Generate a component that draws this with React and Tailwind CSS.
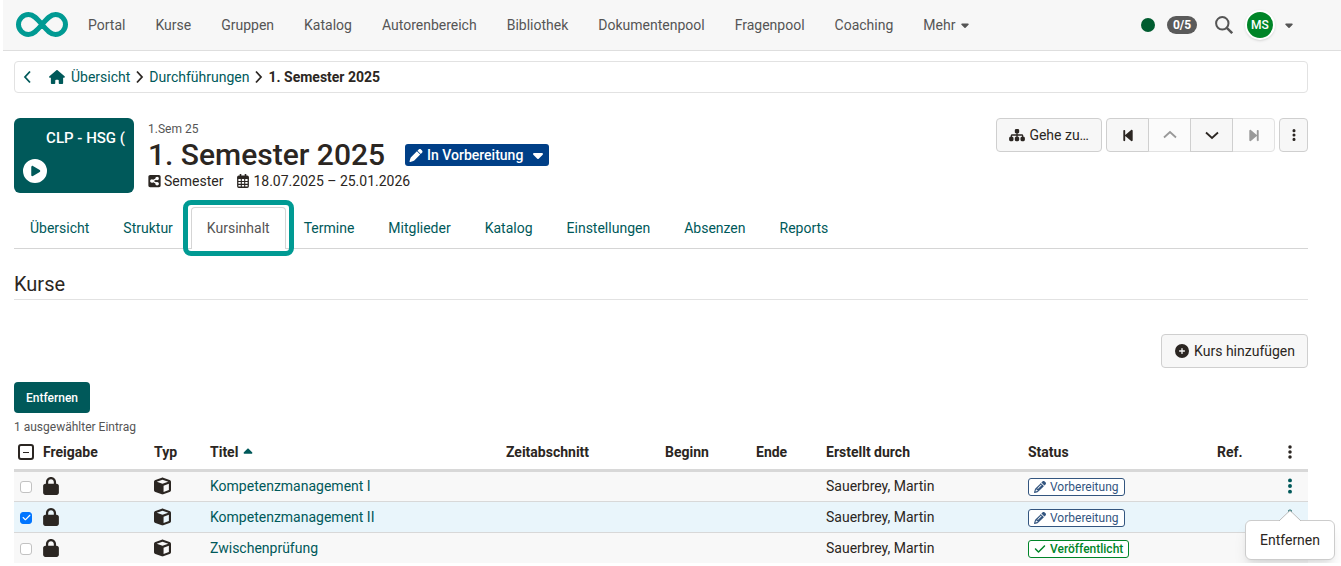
import React, { useState } from 'react'
import {
  FaCaretDown, FaCaretUp, FaCheck, FaCirclePlay, FaCirclePlus, FaCube, FaEllipsisVertical,
  FaBackwardStep, FaForwardStep, FaHouse, FaLock, FaPen, FaPencil, FaSitemap, FaSquareShareNodes
} from 'react-icons/fa6'

const navItems = ['Portal', 'Kurse', 'Gruppen', 'Katalog', 'Autorenbereich', 'Bibliothek', 'Dokumentenpool', 'Fragenpool', 'Coaching']

const tabs = ['Übersicht', 'Struktur', 'Kursinhalt', 'Termine', 'Mitglieder', 'Katalog', 'Einstellungen', 'Absenzen', 'Reports']

const courses = [
  { id: 1, title: 'Kompetenzmanagement I', author: 'Sauerbrey, Martin', status: 'preparation' },
  { id: 2, title: 'Kompetenzmanagement II', author: 'Sauerbrey, Martin', status: 'preparation' },
  { id: 3, title: 'Zwischenprüfung', author: 'Sauerbrey, Martin', status: 'published' },
]

const Logo = () => (
  <svg className="w-[52px] h-[26px]" viewBox="0 0 52 26" fill="none" stroke="#009a93" strokeWidth="5" aria-hidden="true">
    <path d="M26 12.500C21 6.500 17.500 2.500 12.500 2.500A10 10 0 0 0 12.500 22.500C17.500 22.500 21 18.500 26 12.500S34.500 2.500 39.500 2.500A10 10 0 0 1 39.500 22.500C34.500 22.500 31 18.500 26 12.500Z" />
  </svg>
)

const SearchIcon = () => (
  <svg className="w-[18px] h-[18px]" viewBox="0 0 18 18" fill="none" stroke="currentColor" strokeWidth="2" aria-hidden="true">
    <circle cx="7.300" cy="7.300" r="6.200" />
    <path d="M11.800 11.800L17.200 17.200" strokeWidth="2.400" />
  </svg>
)

const chevrons = {
  left: 'M8 1.500L3 7L8 12.500',
  right: 'M3 1.500L8 7L3 12.500',
  up: 'M1 9.500L7 4L13 9.500',
  down: 'M1 4.500L7 10L13 4.500',
}

const Chevron = ({ dir, className }) => (
  <svg className={className} viewBox={dir === 'up' || dir === 'down' ? '0 0 14 14' : '0 0 11 14'} fill="none" stroke="currentColor" strokeWidth="1.800" aria-hidden="true">
    <path d={chevrons[dir]} />
  </svg>
)

const CalendarIcon = () => (
  <svg className="w-3 h-[14px]" viewBox="0 0 12 14" fill="none" stroke="currentColor" aria-hidden="true">
    <rect x="0.750" y="2.250" width="10.500" height="11" rx="1" strokeWidth="1.300" />
    <path d="M0.500 4H11.500" strokeWidth="2" />
    <path d="M3.500 0V3M8.500 0V3" strokeWidth="1.600" />
    <path d="M4.300 5V13M7.700 5V13M1 7.500H11M1 10.400H11" strokeWidth="1.100" />
  </svg>
)

const Navbar = () => (
  <header className="ml-[3px] h-[51px] pl-[13px] pr-[46px] flex items-center justify-between bg-[#f7f7f7] border-b border-[#dedede] text-[#555]">
    <nav className="flex items-center gap-[30px]">
      <a href="#" aria-label="Startseite" className="-mr-[10px]"><Logo /></a>
      {navItems.map(item => <a key={item} href="#">{item}</a>)}
      <button type="button" className="flex items-center gap-1">
        Mehr <FaCaretDown className="w-3 h-3" />
      </button>
    </nav>
    <div className="flex items-center">
      <span className="w-[14px] h-[14px] rounded-full bg-[#005c30]"></span>
      <span className="ml-3 w-[30px] h-[18px] rounded-full bg-[#5a5a5a] text-white text-xs font-bold flex items-center justify-center">0/5</span>
      <button type="button" aria-label="Suche" className="ml-[18px]"><SearchIcon /></button>
      <button type="button" className="ml-3 flex items-center gap-2">
        <span className="w-[30px] h-[30px] rounded-full border-2 border-white bg-[#008528] text-white text-xs font-medium flex items-center justify-center shadow">MS</span>
        <FaCaretDown className="w-3 h-3" />
      </button>
    </div>
  </header>
)

const Breadcrumb = () => (
  <nav className="h-8 px-[7px] flex items-center border border-[#e2e2e2] rounded text-[#00595a]">
    <a href="#" aria-label="Zurück"><Chevron dir="left" className="w-[11px] h-[14px]" /></a>
    <a href="#" className="ml-4 flex items-center gap-[6px]"><FaHouse className="w-4 h-[14px]" />Übersicht</a>
    <Chevron dir="right" className="w-[11px] h-[14px] mx-1 text-[#2b2622]" />
    <a href="#">Durchführungen</a>
    <Chevron dir="right" className="w-[11px] h-[14px] mx-1 text-[#2b2622]" />
    <span className="font-bold text-[#2b2622]">1. Semester 2025</span>
  </nav>
)

const StepButton = ({ label, disabled, children }) => (
  <button type="button" aria-label={label} disabled={disabled}
    className="w-[43px] h-[34px] -ml-px first:ml-0 flex items-center justify-center border border-[#cfcfcf] bg-[#f7f7f7] first:rounded-l last:rounded-r disabled:text-[#999] disabled:bg-[#fbfbfb] disabled:border-[#e2e2e2] enabled:z-10">
    {children}
  </button>
)

const CourseHeader = () => (
  <section className="mt-[25px] flex items-start justify-between">
    <div className="flex">
      <div className="w-[120px] h-[75px] py-[10px] px-[9px] rounded-md bg-[#00595a] text-white flex flex-col justify-between">
        <span className="self-end text-[15px] leading-5 font-medium whitespace-nowrap">CLP - HSG (</span>
        <FaCirclePlay className="w-6 h-6" />
      </div>
      <div className="ml-[14px] pt-[2px]">
        <div className="text-xs leading-[18px] text-[#555]">1.Sem 25</div>
        <div className="h-[33px] pt-px flex items-center gap-5">
          <h1 className="text-[30px] leading-8 font-medium">1. Semester 2025</h1>
          <button type="button" className="h-[22px] px-1 flex items-center gap-1 rounded-[3px] bg-[#003f87] text-white font-medium">
            <FaPen className="w-[14px] h-[13px]" />In Vorbereitung<FaCaretDown className="ml-1 w-[14px] h-4" />
          </button>
        </div>
        <div className="flex items-center gap-[14px] leading-5">
          <span className="flex items-center gap-[3px]"><FaSquareShareNodes className="w-[13px] h-[14px]" />Semester</span>
          <span className="flex items-center gap-1"><CalendarIcon />18.07.2025 – 25.01.2026</span>
        </div>
      </div>
    </div>
    <div className="flex">
      <button type="button" className="h-[34px] px-3 flex items-center gap-1 rounded border border-[#cfcfcf] bg-[#f7f7f7]">
        <FaSitemap className="w-4 h-[14px]" />Gehe zu…
      </button>
      <div className="ml-1 flex">
        <StepButton label="Erster"><FaBackwardStep className="w-3 h-[15px]" /></StepButton>
        <StepButton label="Zurück" disabled><Chevron dir="up" className="w-[14px] h-[14px]" /></StepButton>
        <StepButton label="Weiter"><Chevron dir="down" className="w-[14px] h-[14px]" /></StepButton>
        <StepButton label="Letzter" disabled><FaForwardStep className="w-3 h-[15px]" /></StepButton>
      </div>
      <button type="button" aria-label="Aktionen" className="ml-1 w-[29px] h-[34px] flex items-center justify-center rounded border border-[#cfcfcf] bg-[#f7f7f7]">
        <FaEllipsisVertical className="w-3 h-[14px]" />
      </button>
    </div>
  </section>
)

const Tabs = () => {
  const [active, setActive] = useState('Kursinhalt')

  return (
    <div className="mt-[14px] flex gap-[2px] border-b border-[#d5d5d5]">
      {tabs.map(tab => {
        const isActive = tab === active
        return (
          <div key={tab} className="relative -mb-px">
            <button type="button" onClick={() => setActive(tab)}
              className={`h-[42px] px-[15px] pb-[2px] rounded-t border border-b-0 ${isActive ? 'bg-white border-[#d5d5d5] text-[#555]' : 'border-transparent text-[#00595a]'}`}>
              {tab}
            </button>
            {isActive && <span className="absolute -inset-x-2 -top-[7px] -bottom-[7px] border-[5px] border-[#009a93] rounded-lg pointer-events-none"></span>}
          </div>
        )
      })}
    </div>
  )
}

const Status = ({ status }) => {
  if (status === 'published') {
    return (
      <span className="h-[18px] px-[5px] inline-flex items-center gap-1 rounded-[3px] border border-[#008528] bg-white text-[#008528] text-xs font-medium align-middle">
        <FaCheck className="w-3 h-3" />Veröffentlicht
      </span>
    )
  }
  return (
    <span className="h-[18px] px-[5px] inline-flex items-center gap-1 rounded-[3px] border border-[#33557f] bg-white text-[#33557f] text-xs align-middle">
      <FaPencil className="w-3 h-3" />Vorbereitung
    </span>
  )
}

const Callout = () => (
  <div className="absolute z-20 top-[18px] left-1/2 -translate-x-1/2">
    <div className="h-10 px-[14px] flex items-center rounded-md border border-[#ccc] bg-white shadow-lg">
      <button type="button">Entfernen</button>
    </div>
    <svg className="absolute -top-[10px] left-1/2 -translate-x-1/2 w-[22px] h-[11px]" viewBox="0 0 22 11" aria-hidden="true">
      <path d="M0 11L11 0.500L22 11" fill="#fff" stroke="#bbb" />
    </svg>
  </div>
)

const CourseTable = () => {
  const [selected, setSelected] = useState([2])

  const onToggle = (id, checked) => {
    if (checked) setSelected([...selected, id])
    else setSelected(selected.filter(x => x !== id))
  }

  return (
    <table className="w-full table-fixed text-left">
      <colgroup>
        <col className="w-[25px]" />
        <col className="w-[111px]" />
        <col className="w-14" />
        <col />
        <col className="w-[159px]" />
        <col className="w-[91px]" />
        <col className="w-[70px]" />
        <col className="w-[202px]" />
        <col className="w-[189px]" />
        <col className="w-[59px]" />
        <col className="w-9" />
      </colgroup>
      <thead>
        <tr className="h-[34px] border-b-[3px] border-[#d8d8d8] [&>th]:px-1 [&>th]:font-bold">
          <th>
            <button type="button" aria-label="Auswahl aufheben" className="w-4 h-4 flex items-center justify-center border-2 border-[#2b2622] rounded-[3px]">
              <span className="w-[6px] h-px bg-[#2b2622]"></span>
            </button>
          </th>
          <th>Freigabe</th>
          <th>Typ</th>
          <th>
            <button type="button" className="flex items-center gap-1">Titel <FaCaretUp className="w-3 h-[14px] text-[#00595a]" /></button>
          </th>
          <th>Zeitabschnitt</th>
          <th>Beginn</th>
          <th>Ende</th>
          <th>Erstellt durch</th>
          <th>Status</th>
          <th>Ref.</th>
          <th><button type="button" aria-label="Spalten" className="w-full flex justify-center"><FaEllipsisVertical className="w-4 h-4" /></button></th>
        </tr>
      </thead>
      <tbody>
        {courses.map(course => {
          const isSelected = selected.includes(course.id)
          return (
            <tr key={course.id} className={`h-[31px] border-b border-[#d8d8d8] last:border-b-0 [&>td]:px-1 ${isSelected ? 'bg-[#e9f5fb]' : 'bg-[#f8f8f8]'}`}>
              <td>
                <label className="grid w-4 h-3 place-items-center mt-[2px]">
                  <input type="checkbox" aria-label={course.title}
                    className="col-start-1 row-start-1 w-3 h-3 appearance-none rounded-[3px] border border-[#c2c2c2] bg-white checked:border-[#0075ff] checked:bg-[#0075ff]"
                    checked={isSelected} onChange={(e) => onToggle(course.id, e.target.checked)} />
                  {isSelected && <FaCheck className="col-start-1 row-start-1 z-10 w-[9px] h-[9px] text-white pointer-events-none" />}
                </label>
              </td>
              <td><FaLock className="w-4 h-[18px]" /></td>
              <td><FaCube className="w-[17px] h-[18px]" /></td>
              <td><a href="#" className="text-[#00595a]">{course.title}</a></td>
              <td></td>
              <td></td>
              <td></td>
              <td>{course.author}</td>
              <td><Status status={course.status} /></td>
              <td></td>
              <td className="relative">
                <button type="button" aria-label="Aktionen" className="w-full flex justify-center text-[#00595a]"><FaEllipsisVertical className="w-4 h-[18px]" /></button>
                {course.id === 2 && <Callout />}
              </td>
            </tr>
          )
        })}
      </tbody>
    </table>
  )
}

export default function App() {
  return (
    <div className="bg-white text-[#2b2622] text-sm leading-5 font-['Roboto',sans-serif] [&_button]:cursor-pointer">
      <Navbar />
      <main className="pl-[14px] pr-[33px] pt-[10px]">
        <Breadcrumb />
        <CourseHeader />
        <Tabs />
        <h2 className="mt-[22px] pb-[2px] text-xl leading-[26px] border-b border-[#e2e2e2]">Kurse</h2>
        <div className="mt-[34px] flex justify-end">
          <button type="button" className="h-[34px] px-3 flex items-center gap-1 rounded border border-[#cfcfcf] bg-[#f7f7f7]">
            <FaCirclePlus className="w-4 h-[14px]" />Kurs hinzufügen
          </button>
        </div>
        <button type="button" className="mt-[14px] h-[31px] px-3 block rounded bg-[#00595a] text-white text-xs font-medium">Entfernen</button>
        <div className="mt-[5px] text-xs leading-[18px] text-[#555]">1 ausgewählter Eintrag</div>
        <CourseTable />
      </main>
    </div>
  )
}
